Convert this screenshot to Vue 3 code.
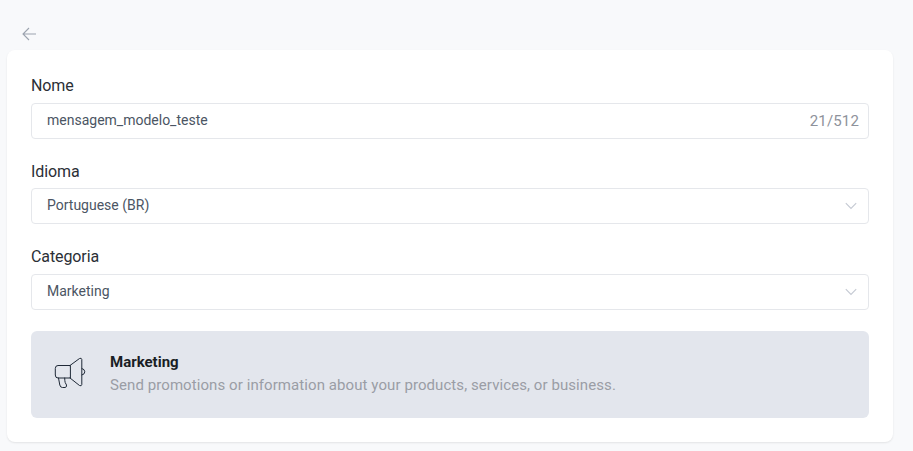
<script setup>
const sels = [
  { label: 'Idioma', value: 'Portuguese (BR)' },
  { label: 'Categoria', value: 'Marketing' },
]
</script>

<template>
  <div class="page">
    <div class="back">
      <svg width="16" height="16" viewBox="0 0 16 16" fill="none" stroke="#9ca3af" stroke-width="1.1">
        <path d="M15 8H2M8 2L2 8l6 6" />
      </svg>
    </div>
    <div class="card">
      <div class="field">
        <div class="label">Nome</div>
        <div class="box">
          <span class="val">mensagem_modelo_teste</span>
          <span class="count">21/512</span>
        </div>
      </div>
      <div v-for="s in sels" :key="s.label" class="field">
        <div class="label">{{ s.label }}</div>
        <div class="box">
          <span class="val">{{ s.value }}</span>
          <svg class="chev" width="12" height="8" viewBox="0 0 12 8" fill="none" stroke="#c4c9d2" stroke-width="1.1">
            <path d="M.8 1.2L6 6.4l5.2-5.2" />
          </svg>
        </div>
      </div>
      <div class="info">
        <svg class="mega" width="32" height="32" viewBox="0 0 32 32" fill="none" stroke="#1f2937" stroke-width="1" stroke-linejoin="round" stroke-linecap="round">
          <path d="M16 8.500H4q-2.700 0-2.700 3v6.500q0 3 2.700 3h12z" />
          <path d="M16 8.500L25.500 1.500q2-1 2.300 1V27.500q-.3 2-2.300 1L16 21" />
          <path d="M28 11.500q2.800.8 2.800 3.300T28 18" />
          <path d="M4.500 21l1.300 7q.5 2.500 2.700 2.500h2.500q2-.3 1.500-2.500l-1.300-2.500q-.5-1.500-.5-4.500" />
        </svg>
        <div class="text">
          <div class="title">Marketing</div>
          <div class="desc">Send promotions or information about your products, services, or business.</div>
        </div>
      </div>
    </div>
  </div>
</template>

<style>
html, body { margin: 0; background: #f8f9fb; }
</style>

<style scoped>
.page {
  height: 451px;
  box-sizing: border-box;
  padding: 0 20px 0 7px;
  font-family: Roboto, sans-serif;
  background: #f8f9fb;
  overflow: hidden;
}
.back {
  height: 50px;
  box-sizing: border-box;
  padding: 26px 0 0 14px;
}
.back svg { display: block; }
.card {
  height: 392px;
  box-sizing: border-box;
  padding: 24px;
  background: #fff;
  border-radius: 8px;
  box-shadow: 0 1px 2px rgba(0, 0, 0, 0.09);
}
.field { margin-bottom: 20px; }
.field:nth-child(2) { margin-bottom: 21px; }
.field:nth-child(2) .label { line-height: 26px; }
.label {
  height: 24px;
  margin-bottom: 5px;
  font-size: 16px;
  line-height: 24px;
  letter-spacing: -0.1px;
  color: #2b2f36;
}
.box {
  height: 36px;
  box-sizing: border-box;
  display: flex;
  align-items: center;
  justify-content: space-between;
  padding: 0 9px 0 15px;
  border: 1px solid #e5e7eb;
  border-radius: 4px;
  background: #fff;
}
.val { font-size: 14px; color: #4b5563; padding-bottom: 2px; }
.count { font-size: 15px; letter-spacing: 0.15px; color: #8e929b; }
.chev { margin-right: 2px; }
.info {
  height: 87px;
  margin-top: 21px;
  box-sizing: border-box;
  display: flex;
  align-items: center;
  padding: 0 23px;
  gap: 24px;
  background: #e3e6ed;
  border-radius: 6px;
}
.mega { flex: none; margin-top: -3px; }
.text { padding-bottom: 2px; }
.title {
  font-size: 15px;
  font-weight: 700;
  line-height: 22px;
  color: #1a1e25;
}
.desc {
  font-size: 15px;
  line-height: 24px;
  letter-spacing: 0.08px;
  color: #9a9da5;
}
</style>
